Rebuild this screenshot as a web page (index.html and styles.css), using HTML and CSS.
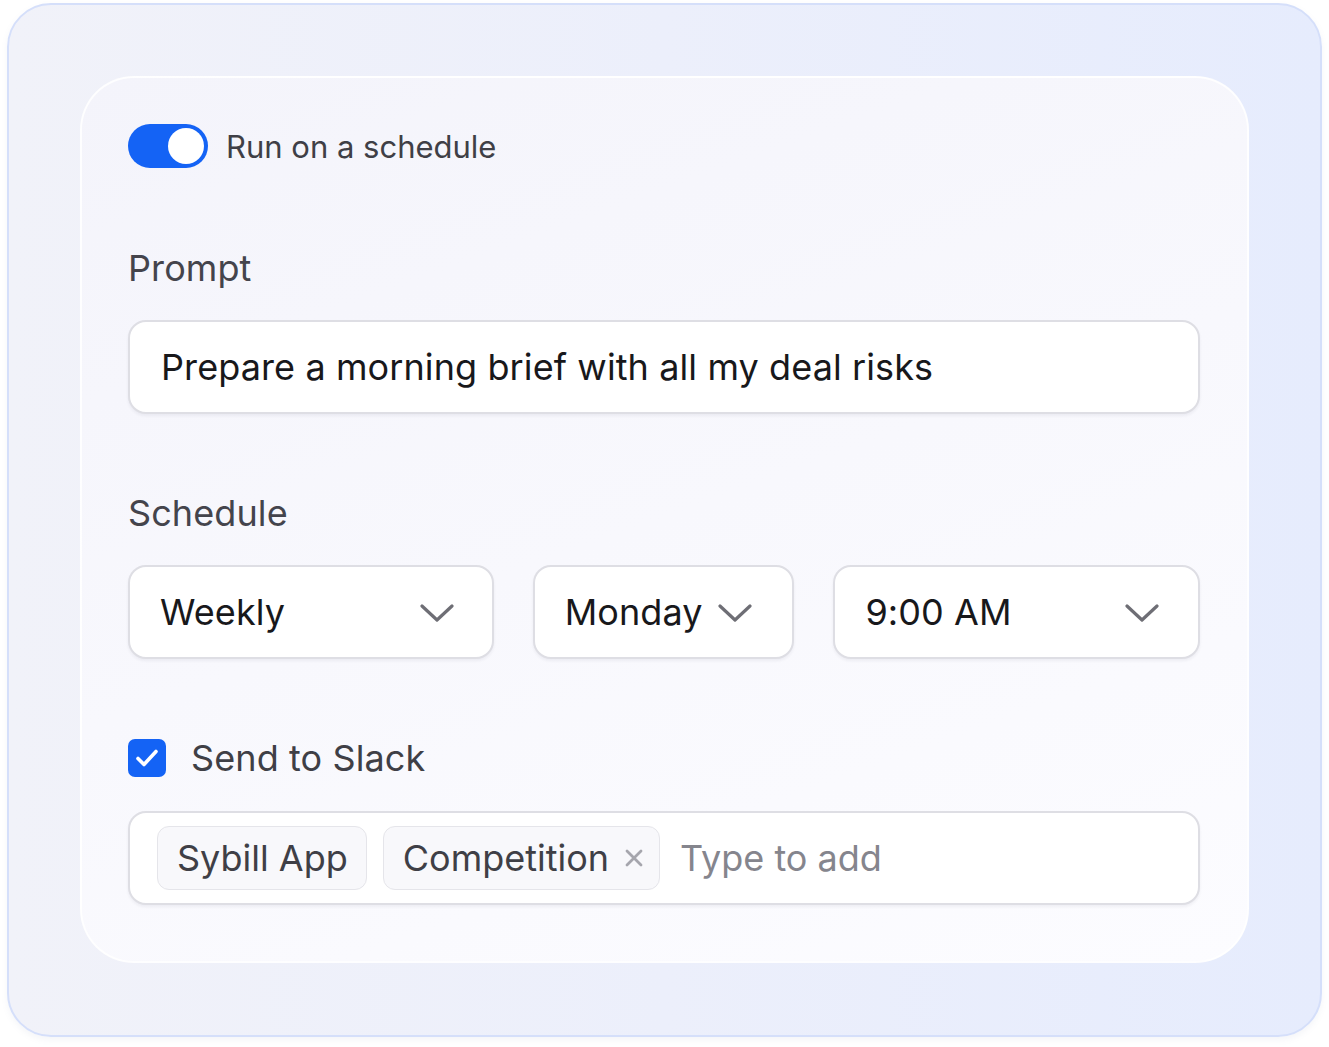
FILE: index.html
```html
<!DOCTYPE html>
<html>
<head>
<meta charset="utf-8">
<link rel="stylesheet" href="styles.css">
</head>
<body>
<div class="frame">
  <div class="card">
    <div class="toggle-row">
      <span class="toggle"><span class="knob"></span></span>
      <span class="toggle-label">Run on a schedule</span>
    </div>

    <div class="label label-prompt">Prompt</div>
    <div class="field prompt-field">Prepare a morning brief with all my deal risks</div>

    <div class="label label-schedule">Schedule</div>
    <div class="selects">
      <div class="field select select-weekly"><span>Weekly</span>
        <svg class="chev" width="34" height="20" viewBox="0 0 34 20"><path d="M2 3 L17 17 L32 3" fill="none" stroke="#6e6e75" stroke-width="3.2" stroke-linecap="round" stroke-linejoin="round"/></svg>
      </div>
      <div class="field select select-day"><span>Monday</span>
        <svg class="chev" width="34" height="20" viewBox="0 0 34 20"><path d="M2 3 L17 17 L32 3" fill="none" stroke="#6e6e75" stroke-width="3.2" stroke-linecap="round" stroke-linejoin="round"/></svg>
      </div>
      <div class="field select select-time"><span>9:00 AM</span>
        <svg class="chev" width="34" height="20" viewBox="0 0 34 20"><path d="M2 3 L17 17 L32 3" fill="none" stroke="#6e6e75" stroke-width="3.2" stroke-linecap="round" stroke-linejoin="round"/></svg>
      </div>
    </div>

    <div class="check-row">
      <span class="checkbox">
        <svg width="30" height="30" viewBox="0 0 30 30"><path d="M6 15.5 L12 21.5 L24 8.5" fill="none" stroke="#fff" stroke-width="3.6" stroke-linecap="round" stroke-linejoin="round"/></svg>
      </span>
      <span class="check-label">Send to Slack</span>
    </div>

    <div class="field tags-field">
      <span class="tag">Sybill App</span>
      <span class="tag tag-x">Competition
        <svg class="x" width="20" height="20" viewBox="0 0 20 20"><path d="M3 3 L17 17 M17 3 L3 17" fill="none" stroke="#a6a6ad" stroke-width="2.8" stroke-linecap="round"/></svg>
      </span>
      <span class="placeholder">Type to add</span>
    </div>
  </div>
</div>
</body>
</html>
```

FILE: styles.css
```css
html, body {
  margin: 0;
  padding: 0;
  background: #ffffff;
}
body {
  font-family: Inter, "Noto Sans", sans-serif;
  width: 1329px;
  height: 1047px;
  overflow: hidden;
}
.frame {
  box-sizing: border-box;
  margin: 3px 0 0 7px;
  width: 1315px;
  height: 1034px;
  border: 2px solid #d5dffa;
  border-radius: 44px;
  background: linear-gradient(90deg, #f1f2f9 0%, #eceffb 50%, #e6ecfd 100%);
  padding: 71px 0 0 71px;
  box-shadow: 0 3px 6px rgba(120, 130, 170, 0.08);
}
.card {
  box-sizing: border-box;
  width: 1169px;
  height: 887px;
  border-radius: 54px;
  border: 2px solid rgba(255, 255, 255, 0.85);
  background: linear-gradient(160deg, #f4f4fb 0%, #f8f8fd 50%, #fcfcff 100%);
  padding: 46px 47px 0 46px;
  display: flex;
  flex-direction: column;
}
.toggle-row {
  display: flex;
  align-items: center;
  height: 44px;
}
.toggle {
  box-sizing: border-box;
  width: 80px;
  height: 44px;
  border-radius: 22px;
  background: #1463f5;
  padding: 4px;
  display: flex;
  justify-content: flex-end;
}
.knob {
  width: 36px;
  height: 36px;
  border-radius: 50%;
  background: #ffffff;
}
.toggle-label {
  margin-left: 18px;
  font-size: 31px;
  color: #3f3f46;
}
.label {
  font-size: 36px;
  letter-spacing: 0.1px;
  line-height: 44px;
  color: #44444c;
}
.label-prompt {
  margin-top: 78px;
}
.label-schedule {
  margin-top: 77px;
}
.field {
  box-sizing: border-box;
  height: 94px;
  background: #ffffff;
  border: 2px solid #dedee4;
  border-radius: 18px;
  box-shadow: 0 2px 3px rgba(30, 30, 60, 0.06);
  display: flex;
  align-items: center;
  font-size: 36px;
  letter-spacing: 0.1px;
  color: #18181b;
}
.prompt-field {
  margin-top: 30px;
  padding-left: 31px;
}
.selects {
  margin-top: 30px;
  display: flex;
  gap: 39px;
}
.select {
  justify-content: space-between;
  padding: 0 38px 0 30px;
}
.select-weekly { width: 366px; }
.select-day { width: 262px; padding-right: 40px; }
.select-time { width: 367px; padding-right: 39px; }
.chev {
  display: block;
  margin-top: 2px;
}
.check-row {
  margin-top: 80px;
  display: flex;
  align-items: center;
  height: 38px;
}
.checkbox {
  width: 38px;
  height: 38px;
  border-radius: 7px;
  background: #1463f5;
  display: flex;
  align-items: center;
  justify-content: center;
}
.check-label {
  margin-left: 25px;
  font-size: 36px;
  letter-spacing: 0.1px;
  color: #3f3f46;
}
.tags-field {
  margin-top: 34px;
  padding-left: 27px;
  gap: 16px;
  letter-spacing: 0;
}
.tag {
  box-sizing: border-box;
  height: 64px;
  display: flex;
  align-items: center;
  padding: 0 18px 0 19px;
  background: #f8f8fb;
  border: 1.5px solid #e5e5ea;
  border-radius: 12px;
  color: #3f3f46;
}
.tag-x {
  padding-right: 15px;
}
.x {
  display: block;
  margin-left: 15px;
}
.placeholder {
  margin-left: 4px;
  color: #85858d;
}
```
